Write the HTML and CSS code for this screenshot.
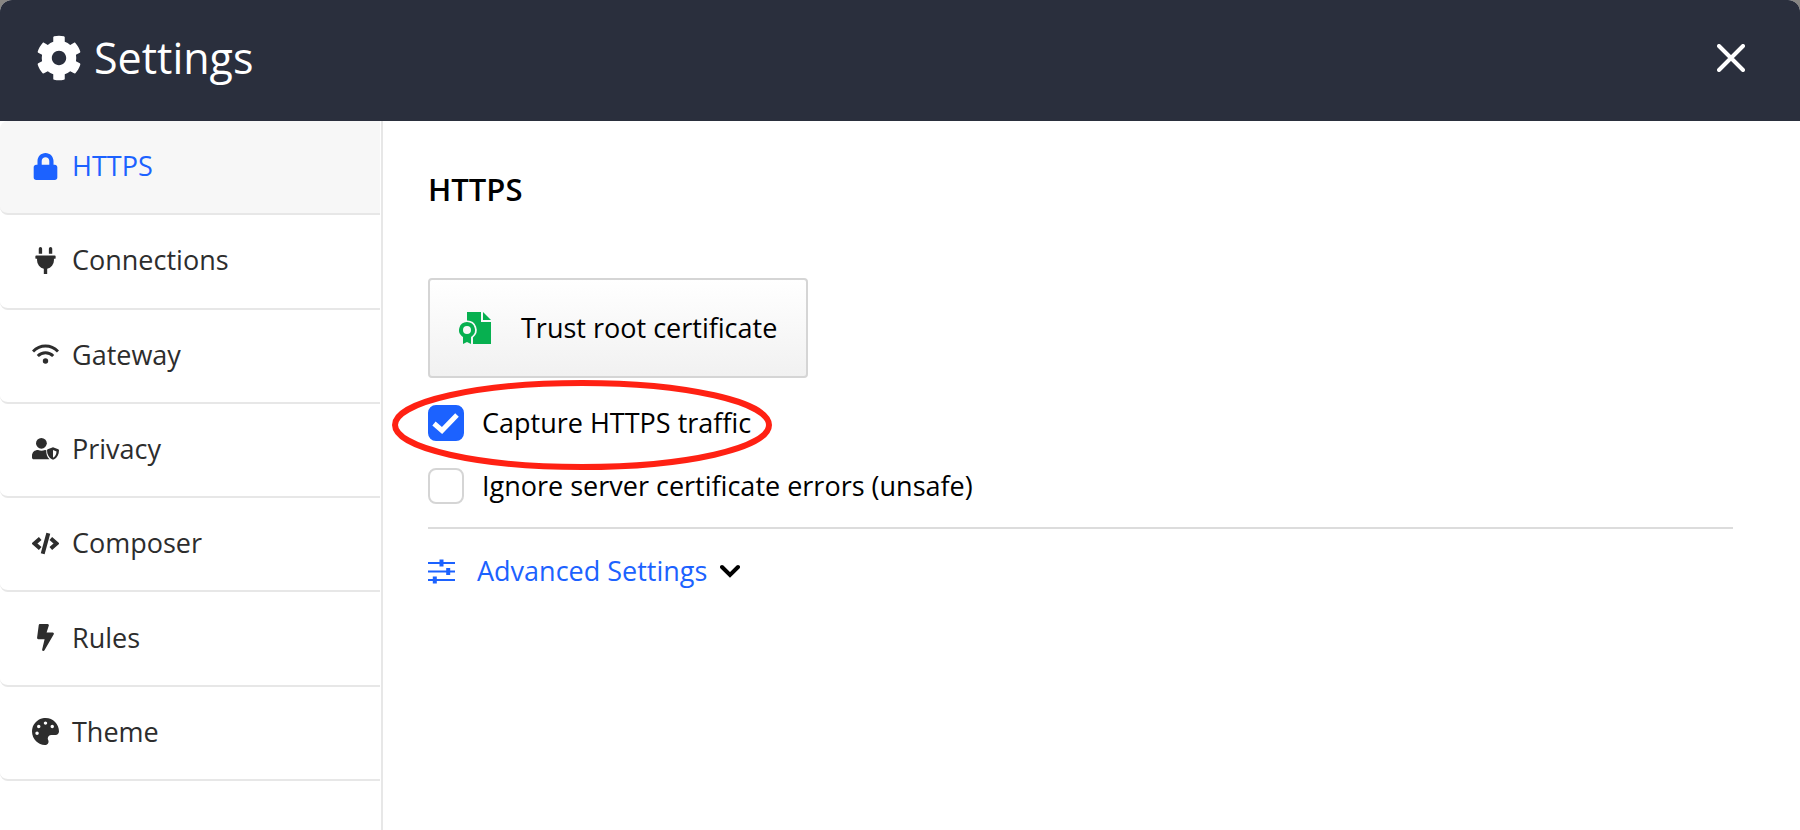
FILE: index.html
```html
<!DOCTYPE html>
<html lang="en">
<head>
<meta charset="utf-8">
<title>Settings</title>
<link rel="stylesheet" href="styles.css">
</head>
<body>
<div class="dialog">
  <header class="titlebar">
    <svg class="gear" viewBox="0 0 512 512" aria-hidden="true"><path d="M487.4 315.7l-42.6-24.6c4.3-23.2 4.3-47 0-70.2l42.6-24.6c4.9-2.8 7.1-8.6 5.5-14-11.1-35.6-30-67.8-54.7-94.6-3.8-4.1-10-5.1-14.8-2.3L380.8 110c-17.9-15.4-38.5-27.3-60.8-35.1V25.8c0-5.6-3.9-10.5-9.4-11.7-36.7-8.2-74.3-7.8-109.2 0-5.5 1.2-9.4 6.1-9.4 11.7V75c-22.2 7.9-42.8 19.8-60.8 35.1L88.700 85.500c-4.900-2.800-11-1.900-14.800 2.300-24.700 26.700-43.600 58.900-54.700 94.600-1.700 5.400.6 11.200 5.500 14L67.300 221c-4.300 23.200-4.300 47 0 70.200l-42.600 24.600c-4.900 2.800-7.100 8.600-5.500 14 11.100 35.600 30 67.800 54.700 94.600 3.800 4.100 10 5.100 14.800 2.300l42.600-24.600c17.900 15.400 38.500 27.300 60.800 35.100v49.200c0 5.600 3.900 10.500 9.400 11.700 36.700 8.200 74.300 7.800 109.200 0 5.500-1.200 9.400-6.100 9.400-11.700v-49.200c22.200-7.900 42.800-19.800 60.800-35.100l42.600 24.600c4.900 2.800 11 1.900 14.800-2.300 24.700-26.700 43.600-58.900 54.700-94.600 1.500-5.500-.7-11.300-5.600-14.100zM256 336c-44.100 0-80-35.900-80-80s35.900-80 80-80 80 35.900 80 80-35.900 80-80 80z"/></svg>
    <h1 class="title">Settings</h1>
    <button class="close" type="button" aria-label="Close">
      <svg class="close-icon" viewBox="0 0 28 28" aria-hidden="true"><path d="M2 2L26 26M26 2L2 26"/></svg>
    </button>
  </header>
  <div class="body">
    <nav class="sidebar">
      <div class="items">
        <a class="item item-active" href="#https">
          <svg class="icon" viewBox="-32 0 512 512" aria-hidden="true"><path d="M400 224h-24v-72C376 68.200 307.800 0 224 0S72 68.200 72 152v72H48c-26.500 0-48 21.500-48 48v192c0 26.500 21.500 48 48 48h352c26.500 0 48-21.500 48-48V272c0-26.500-21.500-48-48-48zm-104 0H152v-72c0-39.700 32.300-72 72-72s72 32.300 72 72v72z"/></svg>
          HTTPS
        </a>
        <a class="item" href="#connections">
          <svg class="icon" viewBox="-64 0 512 512" aria-hidden="true"><path d="M320 32a32 32 0 0 0-64 0v96h64zm48 128H16a16 16 0 0 0-16 16v32a16 16 0 0 0 16 16h16v32a160 160 0 0 0 128 156.800V512h64v-99.200A160 160 0 0 0 352 256v-32h16a16 16 0 0 0 16-16v-32a16 16 0 0 0-16-16zM128 32a32 32 0 0 0-64 0v96h64z"/></svg>
          Connections
        </a>
        <a class="item" href="#gateway">
          <svg class="icon" viewBox="0 0 27 27" aria-hidden="true"><path class="line" d="M1 10.500C8.200 3.300 18.800 3.300 26 10.500M5.800 15C10.200 10.700 16.800 10.700 21.200 15"/><circle cx="13.500" cy="20" r="2.700"/></svg>
          Gateway
        </a>
        <a class="item" href="#privacy">
          <svg class="icon" viewBox="0 0 27 27" aria-hidden="true"><circle cx="9.400" cy="8.300" r="5.400"/><path d="M0 22.500V21c0-4 2.800-6 6-6 2.400 1 4.600 1 7 0l1.300.2c-.3 3.500.8 6.800 3.200 9.100H1.800C.8 24.300 0 23.500 0 22.500z"/><path fill-rule="evenodd" d="M21 12.300l5.300 2c.4.200.7.500.7 1 0 4.200-1.800 7.600-5.200 9.100-.5.200-1 .2-1.500 0-3.400-1.500-5.300-4.900-5.300-9.100 0-.5.300-.8.700-1zM21 15v7.700c2.200-1.200 3.400-3.300 3.500-6.300z"/></svg>
          Privacy
        </a>
        <a class="item" href="#composer">
          <svg class="icon" viewBox="0 0 27 27" aria-hidden="true"><path class="line line-bold" d="M8.200 8.500L2.500 13.500L8.200 18.500M18.800 8.500L24.500 13.500L18.800 18.500M16.300 3.300L10.700 23.700"/></svg>
          Composer
        </a>
        <a class="item" href="#rules">
          <svg class="icon" viewBox="-96 0 512 512" aria-hidden="true"><path d="M296 160H180.600l42.600-129.800C227.200 15 215.700 0 200 0H56C44 0 33.800 8.900 32.200 20.800l-32 240C-1.700 275.200 9.500 288 24 288h118.700L96.600 482.500c-3.600 15.200 8 29.500 23.300 29.500 8.400 0 16.400-4.400 20.800-12l176-304c9.300-15.900-2.200-36-20.700-36z"/></svg>
          Rules
        </a>
        <a class="item" href="#theme">
          <svg class="icon" viewBox="0 0 512 512" aria-hidden="true"><path d="M204.300 5C104.900 24.400 24.800 104.300 5.200 203.400c-37 187 131.700 326.400 258.800 306.700 41.200-6.400 61.400-54.600 42.500-91.700-23.100-45.400 9.900-98.400 60.900-98.400h79.700c35.800 0 64.800-29.600 64.900-65.300C511.500 97.100 368.100-26.900 204.300 5zM96 320c-17.700 0-32-14.300-32-32s14.300-32 32-32 32 14.300 32 32-14.300 32-32 32zm32-128c-17.700 0-32-14.300-32-32s14.300-32 32-32 32 14.300 32 32-14.300 32-32 32zm128-64c-17.700 0-32-14.300-32-32s14.300-32 32-32 32 14.300 32 32-14.300 32-32 32zm128 64c-17.700 0-32-14.300-32-32s14.300-32 32-32 32 14.300 32 32-14.300 32-32 32z"/></svg>
          Theme
        </a>
      </div>
    </nav>
    <main class="panel">
      <h2 class="heading">HTTPS</h2>
      <button class="trust" type="button">
        <svg class="cert" viewBox="0 0 32 32" aria-hidden="true"><path d="M8 0H22V10H32V32H14V25.500A9.500 9.500 0 0 0 8 8.500z"/><path d="M24 0L32 8H24z"/><path fill-rule="evenodd" d="M8 10a8 8 0 0 1 4 14.900V32L8 30L4 32V24.900A8 8 0 0 1 8 10zm0 4a4 4 0 1 0 0 8a4 4 0 0 0 0-8z"/></svg>
        Trust root certificate
      </button>
      <div class="option">
        <input class="check" id="capture" type="checkbox" checked>
        <label for="capture">Capture HTTPS traffic</label>
        <svg class="marker" viewBox="0 0 380 90" preserveAspectRatio="none" aria-hidden="true"><ellipse cx="190" cy="45" rx="187" ry="42"/></svg>
      </div>
      <div class="option">
        <input class="check" id="ignore" type="checkbox">
        <label for="ignore">Ignore server certificate errors (unsafe)</label>
      </div>
      <button class="advanced" type="button">
        <svg class="sliders" viewBox="0 0 27 27" aria-hidden="true"><path d="M0 5H27M0 13.500H27M0 22H27"/><path class="knobs" d="M13.500 1.500V8.500M20.200 10V17M6.800 18.500V25.500"/></svg>
        Advanced Settings
        <svg class="chevron" viewBox="0 0 20 14" aria-hidden="true"><path d="M2 3L10 11L18 3"/></svg>
      </button>
    </main>
  </div>
</div>
</body>
</html>
```
FILE: styles.css
```css
* { box-sizing: border-box; }

body {
  margin: 0;
  background: #888683;
  font-family: "Open Sans", "Noto Sans", sans-serif;
  font-size: 27px;
  line-height: 38px;
  color: #000;
}

button {
  font: inherit;
  color: inherit;
  background: none;
  border: 0;
  padding: 0;
}

.dialog {
  display: flex;
  flex-direction: column;
  min-height: 100vh;
  background: #fff;
  border-radius: 12px 12px 0 0;
  overflow: hidden;
}

.titlebar {
  display: flex;
  align-items: center;
  gap: 12px;
  padding: 28px 55px 33px 36px;
  background: #2a2f3d;
  color: #fff;
}

.gear { width: 46px; height: 46px; fill: currentColor; }

.title {
  flex: 1;
  margin: 0;
  font-size: 43px;
  font-weight: 400;
  line-height: 60px;
}

.close { display: flex; }
.close-icon {
  width: 28px;
  height: 28px;
  fill: none;
  stroke: currentColor;
  stroke-width: 4;
  stroke-linecap: round;
}

.body { flex: 1; display: flex; }

.sidebar {
  flex: 0 0 383px;
  padding-right: 1px;
  border-right: 2px solid #e7e7e7;
}

.items {
  display: grid;
  grid-auto-rows: 1fr;
  min-height: 660px;
}

.item {
  display: flex;
  align-items: center;
  gap: 13px;
  padding: 26px 32px 28px;
  border-bottom: 2px solid #e7e7e7;
  border-radius: 8px 0 0 8px;
  color: #2d2d2d;
  text-decoration: none;
}
.item-active { background: #f7f7f7; color: #1c62ff; }

.icon { width: 27px; height: 27px; fill: currentColor; }
.line { fill: none; stroke: currentColor; stroke-width: 3; }
.line-bold { stroke-width: 4; }

.panel {
  flex: 1;
  display: flex;
  flex-direction: column;
  align-items: flex-start;
  padding: 47px 67px 47px 45px;
}

.heading {
  margin: 0 0 68px;
  font-size: 31px;
  font-weight: 600;
  line-height: 42px;
}

.trust {
  display: flex;
  align-items: center;
  gap: 30px;
  padding: 29px;
  margin-bottom: 14px;
  border: 2px solid #d5d5d5;
  border-radius: 4px;
  background: linear-gradient(#fff, #f1f1f1);
}
.cert { width: 32px; height: 32px; fill: #07b050; }

.option {
  position: relative;
  display: flex;
  align-items: center;
  align-self: stretch;
  gap: 18px;
  padding: 12px 0;
}
.option + .option {
  padding: 13px 0 22px;
  border-bottom: 2px solid #dcdcdc;
}

.check {
  appearance: none;
  width: 36px;
  height: 36px;
  margin: 0;
  border: 2px solid #d5d5d5;
  border-radius: 8px;
  background: #fff;
}
.check:checked {
  border-color: #1c62ff;
  background: #1c62ff url("data:image/svg+xml,%3Csvg xmlns='http://www.w3.org/2000/svg' viewBox='0 0 32 32'%3E%3Cpath d='M4 16.500L12 23.500L27 8' fill='none' stroke='white' stroke-width='5'/%3E%3C/svg%3E") center / 32px no-repeat;
}

.marker {
  position: absolute;
  left: -36px;
  top: -12px;
  width: 380px;
  height: 90px;
  fill: none;
  stroke: #ff2113;
  stroke-width: 6;
  pointer-events: none;
}

.advanced {
  display: flex;
  align-items: center;
  padding: 23px 0;
  color: #1c62ff;
}
.sliders { width: 27px; height: 27px; margin-right: 22px; fill: none; stroke: currentColor; stroke-width: 2; }
.knobs { stroke-width: 4; }
.chevron { width: 20px; height: 14px; margin-left: 13px; fill: none; stroke: #000; stroke-width: 4; stroke-linecap: round; }
```
